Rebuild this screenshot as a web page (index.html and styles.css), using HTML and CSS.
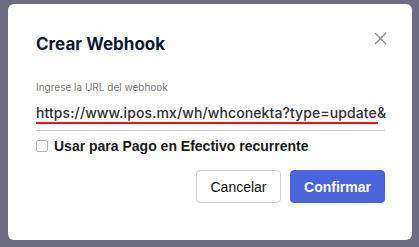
FILE: index.html
```html
<!DOCTYPE html>
<html lang="es">
<head>
<meta charset="utf-8">
<link rel="stylesheet" href="styles.css">
</head>
<body>
<div class="modal">
  <div class="header">
    <h2 class="title">Crear Webhook</h2>
    <svg class="close" width="13" height="13" viewBox="0 0 13 13"><path d="M1 1L12 12M12 1L1 12" stroke="#8a8f98" stroke-width="1.4" fill="none"/></svg>
  </div>
  <div class="label">Ingrese la URL del webhook</div>
  <div class="field">
    <div class="url-text">https://www.ipos.mx/wh/whconekta?type=update&amp;</div>
    <div class="url-line"></div>
  </div>
  <label class="check">
    <span class="box"></span>
    <span class="check-text">Usar para Pago en Efectivo recurrente</span>
  </label>
  <div class="actions">
    <button class="btn btn-cancel">Cancelar</button>
    <button class="btn btn-confirm">Confirmar</button>
  </div>
</div>
</body>
</html>
```
FILE: styles.css
```css
html, body {
  margin: 0;
  padding: 0;
}
body {
  background: #6d6c80;
  width: 419px;
  height: 247px;
  overflow: hidden;
  padding-top: 4px;
  box-sizing: border-box;
}
.modal {
  margin-left: 8px;
  width: 404px;
  height: 236px;
  background: #ffffff;
  border-radius: 6px;
  box-sizing: border-box;
  padding: 0 27px 0 28px;
  font-family: Inter, "Liberation Sans", sans-serif;
}
.header {
  display: flex;
  justify-content: space-between;
  align-items: flex-start;
  padding-top: 29px;
}
.title {
  margin: 0;
  font-size: 17px;
  line-height: 22px;
  font-weight: 700;
  color: #0e1a30;
}
.close {
  margin-top: -1px;
  margin-right: -2px;
}
.label {
  margin-top: 26px;
  font-size: 10px;
  line-height: 13px;
  color: #7a7a7a;
}
.field {
  margin-top: 10px;
  border-bottom: 1px solid #c9c9c9;
  padding-bottom: 6px;
}
.url-text {
  white-space: nowrap;
  font-size: 14px;
  line-height: 17px;
  letter-spacing: 0.1px;
  color: #2e3138;
  font-weight: 500;
}
.url-line {
  height: 2px;
  background: #e8141a;
  margin-right: 7px;
  margin-top: 1px;
}
.check {
  display: flex;
  align-items: center;
  gap: 6px;
  margin-top: 7px;
}
.box {
  width: 10px;
  height: 10px;
  border: 1px solid #b5b5b5;
  border-radius: 2px;
  background: #fff;
}
.check-text {
  font-family: "Liberation Sans", Arial, sans-serif;
  font-weight: 700;
  font-size: 14px;
  line-height: 16px;
  color: #1a1a1a;
}
.actions {
  display: flex;
  justify-content: flex-end;
  gap: 9px;
  margin-top: 16px;
}
.btn {
  font-family: "Liberation Sans", Arial, sans-serif;
  font-size: 14px;
  height: 33px;
  border-radius: 4px;
  box-sizing: border-box;
  cursor: pointer;
}
.btn-cancel {
  width: 85px;
  background: #fff;
  border: 1px solid #cfcfcf;
  color: #111;
}
.btn-confirm {
  width: 95px;
  background: #4a64e0;
  border: 1px solid #4a64e0;
  color: #fff;
  font-weight: 700;
}
```
